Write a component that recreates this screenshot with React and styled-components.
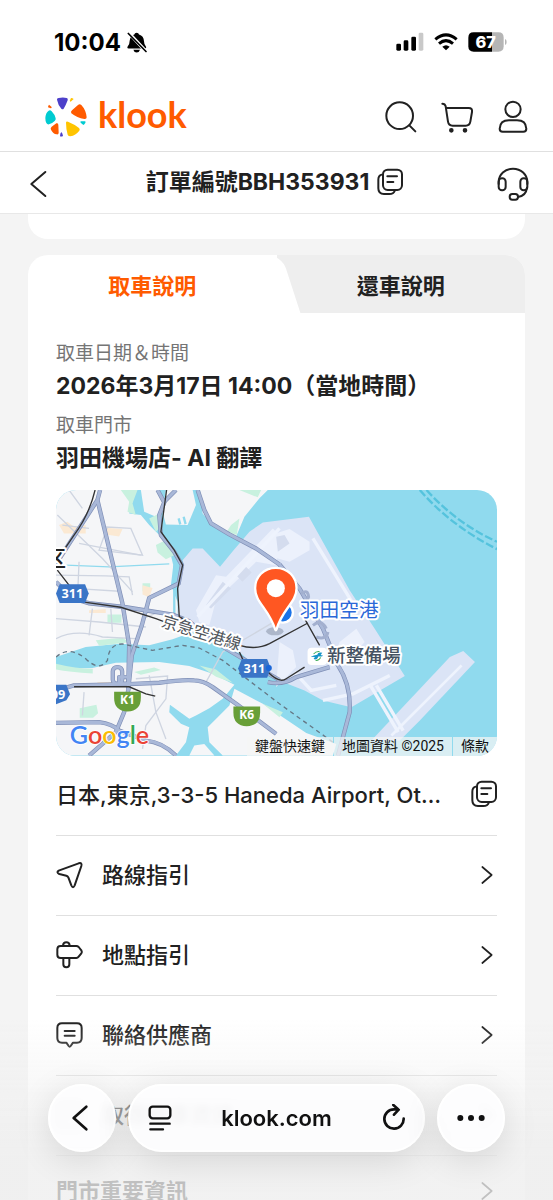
import styled, { createGlobalStyle } from 'styled-components';

const GlobalStyle = createGlobalStyle`
  * {
    box-sizing: border-box;
  }

  body {
    margin: 0;
    background: #f4f4f4;
    color: #212121;
    font-family: Inter, 'Noto Sans CJK TC', sans-serif;
  }

  button {
    border: 0;
    padding: 0;
    background: none;
    color: inherit;
    font: inherit;
    cursor: pointer;
  }

  h1, h2, p, dl, dd, ul {
    margin: 0;
    padding: 0;
  }

  a {
    color: inherit;
    text-decoration: none;
  }
`;

const Page = styled.div`
  display: flex;
  flex-direction: column;
  height: 100vh;
  overflow: hidden;
`;

const Svg = styled.svg`
  display: block;
  flex: none;
  fill: none;
  stroke: currentColor;
  stroke-width: ${(props) => props.$stroke || 6};
  stroke-linecap: round;
  stroke-linejoin: round;
`;

const StatusBar = styled.div`
  display: flex;
  flex: none;
  align-items: center;
  justify-content: space-between;
  height: 84px;
  padding: 0 46px 0 54px;
  background: #fff;
  color: #000;
`;

const Clock = styled.div`
  display: flex;
  align-items: center;
  gap: 6px;
  font-size: 24px;
  font-weight: 700;
`;

const StatusIcons = styled.div`
  display: flex;
  align-items: center;
  gap: 10px;
`;

const BrandBar = styled.header`
  display: flex;
  flex: none;
  align-items: center;
  justify-content: space-between;
  height: 68px;
  padding: 0 22px 2px 45px;
  border-bottom: 1px solid #e0e0e0;
  background: #fff;
`;

const Brand = styled.a`
  display: flex;
  align-items: center;
  gap: 11px;
  color: #ff5b00;
  font-family: Lato, sans-serif;
  font-size: 36px;
  font-weight: 700;
  line-height: 40px;

  span {
    padding-bottom: 6px;
  }
`;

const BrandActions = styled.nav`
  display: flex;
  gap: 20px;
`;

const OrderBar = styled.div`
  display: flex;
  flex: none;
  align-items: center;
  justify-content: space-between;
  height: 62px;
  padding: 2px 22px 0;
  border-bottom: 1px solid #e8e8e8;
  background: #fff;
`;

const OrderTitle = styled.div`
  display: flex;
  align-items: center;
  gap: 8px;
  padding-bottom: 4px;

  h1 {
    font-size: 23px;
    font-weight: 700;
    line-height: 32px;
  }
`;

const Content = styled.main`
  display: flex;
  flex: 1;
  flex-direction: column;
  gap: 16px;
  min-height: 0;
  padding: 0 28px;
`;

const PreviousCard = styled.div`
  flex: none;
  height: 25px;
  border-radius: 0 0 20px 20px;
  background: #fff;
`;

const Card = styled.section`
  flex: none;
  border-radius: 20px;
  background: #fff;
`;

const Tabs = styled.div`
  display: flex;
  height: 58px;
  border-radius: 20px 20px 0 0;
  background: #eee;
  overflow: hidden;
`;

const Tab = styled.button`
  position: relative;
  z-index: ${(props) => (props.$active ? 1 : 0)};
  flex: 1;
  font-size: 22px;
  font-weight: 700;
  color: ${(props) => (props.$active ? '#ff5b00' : '#212121')};
  background: ${(props) => (props.$active ? '#fff' : 'none')};

  /* slanted right edge of the selected tab */
  &::after {
    content: '';
    display: ${(props) => (props.$active ? 'block' : 'none')};
    position: absolute;
    z-index: -1;
    top: 0;
    right: -14px;
    width: 60px;
    height: 58px;
    border-top-right-radius: 14px;
    background: #fff;
    transform: skewX(18deg);
  }
`;

const CardBody = styled.div`
  padding: 27px 28px 60px;
`;

const Details = styled.dl`
  display: grid;
  gap: 8px;
  margin-bottom: 14px;

  dt {
    color: #757575;
    font-size: 19px;
    line-height: 28px;
  }

  dd {
    font-size: 23px;
    font-weight: 700;
    line-height: 36px;
  }
`;

const MapBox = styled.div`
  position: relative;
  aspect-ratio: 440 / 265;
  border-radius: 20px;
  background: #90daee;
  overflow: hidden;

  > svg {
    display: block;
    width: 100%;
    height: 100%;
  }
`;

const Attribution = styled.div`
  position: absolute;
  right: 0;
  bottom: 0;
  display: flex;
  height: 19px;
  color: #111;
  font-family: Roboto, 'Noto Sans CJK TC', sans-serif;
  font-size: 14px;
  line-height: 19px;

  > * {
    padding: 0 8px;
    background: rgba(245, 245, 245, 0.72);
  }

  > * + * {
    margin-left: 1px;
  }
`;

const Address = styled.div`
  display: flex;
  align-items: center;
  justify-content: space-between;
  gap: 20px;
  height: 79px;

  p {
    overflow: hidden;
    font-size: 22px;
    font-weight: 500;
    line-height: 32px;
    text-overflow: ellipsis;
    white-space: nowrap;
  }

  button {
    padding-bottom: 2px;
  }
`;

const Menu = styled.ul`
  list-style: none;
`;

const MenuButton = styled.button`
  display: flex;
  align-items: center;
  width: 100%;
  height: ${(props) => (props.$strong ? 72 : 80)}px;
  border-top: 1px solid #e0e0e0;
  font-size: 22px;
  font-weight: ${(props) => (props.$strong ? 700 : 500)};
  text-align: left;

  span {
    flex: 1;
    margin-left: ${(props) => (props.$strong ? 0 : 18)}px;
    padding-bottom: 4px;
  }
`;

const Toolbar = styled.div`
  position: fixed;
  right: 0;
  bottom: 0;
  left: 0;
  display: flex;
  align-items: center;
  gap: 12px;
  height: 180px;
  padding: 16px 48px 0;
  background: linear-gradient(
    rgba(244, 244, 244, 0),
    rgba(240, 240, 240, 0.5) 40%,
    rgba(238, 238, 238, 0.78) 75%
  );
`;

const Glass = styled.div`
  display: flex;
  align-items: center;
  justify-content: center;
  height: 68px;
  border: 2px solid #fff;
  border-radius: 34px;
  background: rgba(253, 253, 254, 0.9);
  box-shadow: 0 8px 36px rgba(0, 0, 0, 0.12);
  backdrop-filter: blur(3px);
  color: #111;
`;

const RoundButton = styled(Glass).attrs({ as: 'button' })`
  flex: none;
  width: 68px;
  border: 2px solid #fff;
  background: rgba(253, 253, 254, 0.93);
`;

const AddressPill = styled(Glass)`
  flex: 1;
  justify-content: space-between;
  padding: 0 16px;
  font-size: 22px;
  font-weight: 600;
`;

function CopyIcon() {
  return (
    <Svg width="26" height="28" viewBox="312 503 78 84">
      <rect x="330" y="508" width="57" height="61" rx="14" />
      <path d="M326 523q-10 3-10 15v26q0 17 17 17h16q13 0 16-9M343 528h29M343 545h18" />
    </Svg>
  );
}

function Chevron() {
  return (
    <Svg width="20" height="28" viewBox="601 273 60 84" $stroke={5}>
      <path d="M617 291l28 24-28 24" />
    </Svg>
  );
}

function BellOffIcon() {
  return (
    <Svg width="20" height="21" viewBox="383 94 60 62" $stroke={5}>
      <g fill="currentColor" stroke="none">
        <path d="M412 96q6 0 7 5 14 4 15 20 0 10 6 17 2 5-4 5H388q-6 0-3-6 6-6 6-17 2-16 14-19 1-5 7-5z" />
        <path d="M402 147h20q-2 8-10 8t-10-8z" />
      </g>
      <path d="M389 97l52 56" stroke="#fff" strokeWidth="10" />
      <path d="M387 98l53 54" />
    </Svg>
  );
}

function SignalIcon() {
  return (
    <Svg width="28" height="20" viewBox="361 95 84 60">
      <g fill="currentColor" stroke="none">
        <rect x="362" y="130" width="14" height="21" rx="4" />
        <rect x="384" y="120" width="14" height="31" rx="4" />
        <rect x="407" y="109" width="14" height="42" rx="4" />
        <rect x="429" y="97" width="14" height="54" rx="4" fill="#c9c9c9" />
      </g>
    </Svg>
  );
}

function WifiIcon() {
  return (
    <Svg width="24" height="20" viewBox="474 94 72 60" $stroke={9}>
      <g strokeLinecap="butt">
        <path d="M478 116Q510 89 542 116" />
        <path d="M489 129Q510 111 531 129" />
      </g>
      <path d="M499 138q11-9 22 0l-11 11z" fill="currentColor" stroke="none" />
    </Svg>
  );
}

function BatteryIcon() {
  return (
    <Svg width="39" height="20" viewBox="576 94 117 60">
      <g stroke="none">
        <path d="M593 95h55v58h-55q-16 0-16-16v-26q0-16 16-16z" fill="#000" />
        <path d="M648 95h19q16 0 16 16v26q0 16-16 16h-19z" fill="#b5b5b5" />
        <path d="M687 115q5 2 5 9t-5 9z" fill="#b5b5b5" />
        <text x="629" y="142" fill="#fff" fontSize="49" fontWeight="800" textAnchor="middle">67</text>
      </g>
    </Svg>
  );
}

function KlookMark() {
  return (
    <Svg width="42" height="40" viewBox="135 287 126 120">
      <g stroke="none">
        <path fill="#4d40ca" d="M171 295q-1-4 5-5 13-3 24 0 5 1 3 7-5 14-12 25-3 4-7 0-10-11-13-27z" />
        <path fill="#ffc400" d="M213 290q5 0 8 3l-9 8q-3 0-2-4z" />
        <path fill="#ff5b00" d="M214 336q-3-4 2-9l18-16q5-4 10 0 14 15 16 37 0 6-7 5-22-3-39-17z" />
        <path fill="#00cbd1" d="M242 360h13q3 1 1 5l-5 6q-3 0-10-8z" />
        <path fill="#ffc400" d="M198 364q0-5 6-3 20 8 33 19 4 3 1 8-11 14-27 17-6 0-8-5-5-18-5-36z" />
        <path fill="#4d40ca" d="M184 392q4 5 5 11-3 4-9 2 0-9 4-13z" />
        <path fill="#ff5b00" d="M153 385q-3-5 2-9l14-10q6-2 6 5l1 23q0 6-6 5-11-2-17-14z" />
        <path fill="#00cbd1" d="M136 350q1-16 10-22 5-3 9 2 9 9 12 21 1 5-3 8-8 8-17 10-5 1-8-4-3-5-3-15z" />
        <path fill="#ff5b00" d="M147 310l8 7q0 4-3 4l-8-3q0-5 3-8z" />
      </g>
    </Svg>
  );
}

const ROADS = [
  'M145 45L220 355 240 480 237 615',
  'M145 45L22 235M145 45l8-30',
  'M21 290Q70 345 120 354L230 366 370 388 420 408 480 460 580 520 690 584',
  'M325 15L345 52 330 90 335 150 375 200 398 240 388 295 300 338 278 420 248 510 237 615 225 680 200 740 120 810',
  'M380 15L345 50',
  'M21 615L75 600 240 596 330 592Q400 582 435 585 460 585 490 605L560 655 680 745',
  'M21 712L150 710Q190 715 210 735L290 765Q340 770 380 810',
  'M445 15L465 75 485 115 540 148 620 190 690 238',
  'M655 590Q700 600 740 575L840 545M690 238L750 310 820 430 865 540Q905 600 900 680L865 810',
];

const MINOR_ROADS = [
  'M25 90L160 220 250 320',
  'M160 125L245 130 280 210 150 195 175 125',
  'M90 175L275 210M90 230L85 345',
  'M21 270L170 272 240 275 250 330',
  'M85 310L210 318M21 400L150 410 290 425',
  'M130 370L120 450M185 370L190 440',
  'M21 460Q80 430 160 455L260 460',
  'M260 580L355 572 350 640 290 720 280 790',
  'M280 400L330 380M60 15L100 70M40 120L120 130',
  'M105 620L100 690M470 590L520 500 690 400',
  'M300 570L320 680 350 760',
];

const LABEL_HALO = { paintOrder: 'stroke', stroke: '#fff', strokeWidth: 12, strokeLinejoin: 'round' };

function Shield({ x, y, children }) {
  return (
    <g transform={`translate(${x} ${y})`}>
      <path d="M-38-28h76l11 28-11 28h-76l-11-28z" fill="#3a75c7" />
      <text y="14" fill="#fff" fontFamily="Noto Sans, sans-serif" fontSize="38" fontWeight="700" textAnchor="middle">{children}</text>
    </g>
  );
}

function ExpresswayBadge({ x, y, children }) {
  return (
    <g transform={`translate(${x} ${y})`}>
      <path d="M-40-29h80v18q0 40-40 41-40-1-40-41z" fill="#689f38" />
      <text y="9" fill="#fff" fontFamily="Noto Sans, sans-serif" fontSize="36" fontWeight="700" textAnchor="middle">{children}</text>
    </g>
  );
}

function AirportMap() {
  return (
    <svg viewBox="21 15 1320 795" preserveAspectRatio="xMidYMid slice" role="img" aria-label="羽田空港">
      {/* land */}
      <g fill="#f5f6f8">
        <path d="M21 15H260L240 85 275 90 300 120 330 150 360 190 372 240 365 300 385 350 385 400 430 440 370 462 300 480 210 475 110 485 21 515z" />
        <path d="M21 548Q80 550 130 548L200 532 330 530 420 542 490 565 555 598 520 640 480 668 440 690 420 700 362 658 360 680 395 715 420 725 410 770 380 810H21z" />
        <path d="M555 610L640 655 770 742 860 775 850 810H520L480 770 475 725 505 695 540 660z" />
        <path d="M420 810L435 780 465 775 495 810z" />
        <path d="M350 15H430L440 60 415 120 350 118 340 80z" />
        <path d="M275 15H330L345 60 320 95 285 80z" />
        <path d="M452 15H655L630 40 585 95 560 155 500 130 460 85z" />
      </g>
      <g fill="#c8f1df">
        <path d="M215 15h50l-15 40 10 35-25-10 5-30zM570 15h65l-10 22zM545 120l25-20-8 50-30-10zM320 180l30-15 25 45-25 12-25-20z" />
        <path d="M280 294h23v24h-23zM175 388h42v24h-42zM92 668l50-10 5 25-15 14H92zM21 535q60 15 110 15v14q-70-5-110-12zM140 465l80-8 20 14-90 10zM450 540l50 12 50 40-50-18zM640 655l60 25-10 15z" />
        <path d="M300 100l30-15 10 35-20 20zM255 560l60-14 20 8-60 14z" />
      </g>
      <g fill="#fbe9d3">
        <path d="M30 120l25-10 20 15 35-5v25H45zM120 375l50-4v12h-50zM170 128l50 4-10 22-35-5zM145 590h50v12h-50zM280 300l30 8-10 28-20-8z" />
      </g>

      {/* airport island and the outer runway */}
      <g fill="#dbe4f6">
        <path d="M385 400L388 290 404 240 400 225 430 190 460 190 512 245 550 198 600 140 640 112 778 95 900 315 975 430 1065 572 905 665 820 645 765 615 700 590 620 545 570 500 430 440z" />
        <path d="M965 765L1200 515 1240 497 1275 530 1110 705 1050 765z" />
      </g>
      <g fill="#ecf1fc">
        <path d="M440 375L500 270 530 275 670 130 690 150 680 240 620 230 500 345 480 420 450 410z" />
        <path d="M665 150L720 132 780 170 780 195 720 230 665 215z" />
        <path d="M870 470L920 430 945 470 900 520 850 520zM690 470l40 25 10 50-60 60z" />
      </g>
      <g fill="#d4dcee">
        <path d="M470 360l50-70 25 20-60 60zM680 155l25-5 15 25-35 25zM560 270l25-30 22 22-28 28z" />
      </g>
      <g fill="none" stroke="#eef3fd" strokeWidth="10">
        <path d="M790 160L910 355M735 560L785 615 860 600M820 645L910 625 1020 570" />
        <path d="M962 600L1045 740M980 600L1060 735" />
        <path d="M1025 750L1235 540" strokeWidth="8" />
        <path d="M445 395L690 130" />
      </g>

      {/* small canals */}
      <g fill="none" stroke="#90daee">
        <path d="M50 240L180 245 360 236" strokeWidth="4" />
        <path d="M388 100l5 18M403 95l6 22M375 240v150" strokeWidth="7" />
      </g>

      <g fill="none" stroke="#cfd5e1" strokeWidth="4">
        {MINOR_ROADS.map((d) => <path key={d} d={d} />)}
      </g>
      <g fill="none" stroke="#8090b7" strokeWidth="13" strokeLinejoin="round">
        {ROADS.map((d) => <path key={d} d={d} />)}
        <rect x="191" y="545" width="28" height="50" rx="13" />
        <path d="M210 575h28v20h-28z" />
      </g>
      <g fill="none" stroke="#a9b8d8" strokeWidth="9" strokeLinejoin="round">
        {ROADS.map((d) => <path key={d} d={d} />)}
        <rect x="191" y="545" width="28" height="50" rx="13" />
        <path d="M210 575h28v20h-28z" />
      </g>

      {/* terminal loops */}
      <g fill="none" stroke="#a3b0cf" strokeWidth="9">
        <path d="M755 325q20-15 22 10l-10 20M790 420q25-20 40 10M800 455q30 10 35-15" />
      </g>

      {/* railways */}
      <g fill="none" stroke="#333" strokeWidth="4">
        <path d="M138 15Q120 90 75 150L22 228M25 255L60 300" />
        <path d="M352 15L335 140 375 195 400 240 385 310 390 395 420 410" />
        <path d="M100 350L215 366 320 400 360 415M570 480Q620 495 660 475L775 413" />
        <path d="M75 604H240L290 625 318 632M570 500l10 22M655 560Q690 595 710 580L765 545M765 400L810 480" />
      </g>

      <path d="M21 515Q60 480 110 520 150 560 175 525 180 475 220 476L310 495 400 480 450 488 520 525 690 655 850 770" fill="none" stroke="#657886" strokeWidth="4" strokeDasharray="13 11" />
      <g fill="none" stroke="#55c3dd" strokeWidth="7" strokeDasharray="24 8">
        <path d="M1110 15Q1200 120 1341 192" />
        <path d="M1130 15Q1220 115 1341 170" />
      </g>

      <Shield x={70} y={325}>311</Shield>
      <Shield x={615} y={549}>311</Shield>
      <path d="M21 598H52l11 28-11 18-31 12z" fill="#3a75c7" />
      <text x="5" y="640" fill="#fff" fontFamily="Noto Sans, sans-serif" fontSize="38" fontWeight="700">09</text>
      <ExpresswayBadge x={235} y={648}>K1</ExpresswayBadge>
      <ExpresswayBadge x={592} y={692}>K6</ExpresswayBadge>

      <text x="-15" y="243" fill="#222" fontSize="66" fontWeight="500" {...LABEL_HALO}>区</text>
      <text transform="translate(334 423) rotate(17)" fill="#50555b" fontSize="49" {...LABEL_HALO}>京急空港線</text>
      <text x="751" y="394" fill="#2a68d8" fontSize="59" {...LABEL_HALO}>羽田空港</text>
      <rect x="774" y="487" width="58" height="52" rx="12" fill="#fff" />
      <path d="M783 514q10-4 20-6 2-9 15-6l-5 7 8 2q-9 4-14 2-4 12-15 8l4-6z" fill="#1594c7" />
      <path d="M792 506q8-9 18-7M813 516q-4 10-15 9" fill="none" stroke="#3fae5a" strokeWidth="3" />
      <text x="833" y="530" fill="#455262" fontSize="55" fontWeight="500" {...LABEL_HALO}>新整備場</text>

      {/* airport pin half hidden by the marker */}
      <circle cx="700" cy="382" r="30" fill="#1a73e8" stroke="#fff" strokeWidth="7" />
      <circle cx="658" cy="548" r="9" fill="#1a66d8" />
      <ellipse cx="676" cy="438" rx="26" ry="12" fill="#8d99ad" opacity="0.6" />
      <path d="M679 248c-36 0-62 27-62 61 0 43 40 60 60 123q2 6 4 0c18-62 60-80 60-123 0-34-26-61-62-61z" fill="#ff5722" stroke="#fff" strokeWidth="7" />
      <circle cx="679" cy="309" r="27" fill="#fff" />

      <text x="62" y="775" fontSize="75" fontFamily="Lato, sans-serif" fontWeight="600" {...LABEL_HALO} strokeWidth="5">
        <tspan fill="#4285f4">G</tspan>
        <tspan fill="#ea4335">o</tspan>
        <tspan fill="#fbbc05">o</tspan>
        <tspan fill="#4285f4">g</tspan>
        <tspan fill="#34a853">l</tspan>
        <tspan fill="#ea4335">e</tspan>
      </text>
    </svg>
  );
}

const MENU_ITEMS = [
  {
    label: '路線指引',
    icon: (
      <Svg width="28" height="28" viewBox="171 273 84 84">
        <path d="M179 302l60-22q11-3 8 8l-20 58q-5 11-10 0l-9-24q-2-4-6-5l-21-5q-10-5-2-10z" />
      </Svg>
    ),
  },
  {
    label: '地點指引',
    icon: (
      <Svg width="28" height="28" viewBox="171 515 84 84">
        <path d="M185 530h47q4 0 7 3l8 10q3 5 0 9l-8 10q-3 4-7 4h-47q-10 0-10-10v-16q0-10 10-10z" />
        <path d="M192 528q1-9 10-9t10 9M193 568v17q0 9 9 9t9-9v-17" />
      </Svg>
    ),
  },
  {
    label: '聯絡供應商',
    icon: (
      <Svg width="28" height="28" viewBox="171 755 84 84">
        <path d="M189 762h45q14 0 14 14v30q0 14-14 14h-12l-7 10q-3 4-6 0l-7-10h-13q-14 0-14-14v-30q0-14 14-14z" />
        <path d="M197 785h30M197 799h30" />
      </Svg>
    ),
  },
  {
    label: '取得租車資訊',
    icon: (
      <Svg width="28" height="28" viewBox="171 755 84 84">
        <path d="M189 762h45q14 0 14 14v42q0 14-14 14h-45q-14 0-14-14v-42q0-14 14-14zM192 785h38M192 805h24" />
      </Svg>
    ),
  },
];

export default function App() {
  return (
    <Page>
      <GlobalStyle />
      <StatusBar>
        <Clock>
          10:04
          <BellOffIcon />
        </Clock>
        <StatusIcons>
          <SignalIcon />
          <WifiIcon />
          <BatteryIcon />
        </StatusIcons>
      </StatusBar>

      <BrandBar>
        <Brand href="#home">
          <KlookMark />
          <span>klook</span>
        </Brand>
        <BrandActions>
          <button type="button" aria-label="搜尋">
            <Svg width="36" height="36" viewBox="321 297 108 108">
              <circle cx="371" cy="347" r="40" />
              <path d="M400 376l18 18" />
            </Svg>
          </button>
          <button type="button" aria-label="購物車">
            <Svg width="36" height="36" viewBox="489 297 108 108">
              <path d="M499 311q8 0 10 8l7 46q2 12 14 12h39q12 0 14-12l5-29q2-12-10-12h-68" />
              <circle cx="526" cy="391" r="4" fill="currentColor" />
              <circle cx="567" cy="391" r="4" fill="currentColor" />
            </Svg>
          </button>
          <button type="button" aria-label="帳戶">
            <Svg width="36" height="36" viewBox="658 297 108 108">
              <circle cx="712" cy="328" r="23" />
              <path d="M700 361h24q27 0 28 25 0 9-9 9h-62q-9 0-9-9 1-25 28-25z" />
            </Svg>
          </button>
        </BrandActions>
      </BrandBar>

      <OrderBar>
        <button type="button" aria-label="返回">
          <Svg width="32" height="32" viewBox="66 506 96 96">
            <path d="M136 518l-42 36 42 36" />
          </Svg>
        </button>
        <OrderTitle>
          <h1>訂單編號BBH353931</h1>
          <button type="button" aria-label="複製訂單編號"><CopyIcon /></button>
        </OrderTitle>
        <button type="button" aria-label="客服">
          <Svg width="36" height="36" viewBox="658 501 108 108">
            <path d="M669 555v-6a43 40 0 0 1 86 0v6" />
            <rect x="669" y="538" width="21" height="36" rx="10" />
            <rect x="734" y="538" width="21" height="36" rx="10" />
            <path d="M754 566q-3 25-27 28" />
            <rect x="702" y="585" width="25" height="17" rx="8" />
          </Svg>
        </button>
      </OrderBar>

      <Content>
        <PreviousCard />
        <Card>
          <Tabs role="tablist">
            <Tab type="button" role="tab" aria-selected="true" $active>取車說明</Tab>
            <Tab type="button" role="tab" aria-selected="false">還車說明</Tab>
          </Tabs>
          <CardBody>
            <Details>
              <div>
                <dt>取車日期＆時間</dt>
                <dd>2026年3月17日 14:00（當地時間）</dd>
              </div>
              <div>
                <dt>取車門市</dt>
                <dd>羽田機場店- AI 翻譯</dd>
              </div>
            </Details>

            <MapBox>
              <AirportMap />
              <Attribution>
                <button type="button">鍵盤快速鍵</button>
                <span>地圖資料 ©2025</span>
                <a href="#terms">條款</a>
              </Attribution>
            </MapBox>

            <Address>
              <p>日本,東京,3-3-5 Haneda Airport, Ota City, Tokyo</p>
              <button type="button" aria-label="複製地址"><CopyIcon /></button>
            </Address>

            <Menu>
              {MENU_ITEMS.map((item) => (
                <li key={item.label}>
                  <MenuButton type="button">
                    {item.icon}
                    <span>{item.label}</span>
                    <Chevron />
                  </MenuButton>
                </li>
              ))}
              <li>
                <MenuButton type="button" $strong>
                  <span>門市重要資訊</span>
                  <Chevron />
                </MenuButton>
              </li>
            </Menu>
          </CardBody>
        </Card>
      </Content>

      <Toolbar>
        <RoundButton type="button" aria-label="上一頁">
          <Svg width="28" height="28" viewBox="203 163 84 84" $stroke={8}>
            <path d="M258 171l-38 34 38 34" />
          </Svg>
        </RoundButton>
        <AddressPill>
          <button type="button" aria-label="頁面選單">
            <Svg width="28" height="28" viewBox="440 163 84 84" $stroke={7}>
              <rect x="451" y="171" width="62" height="35" rx="9" />
              <path d="M453 222h58M453 239h38" />
            </Svg>
          </button>
          <span>klook.com</span>
          <button type="button" aria-label="重新載入">
            <Svg width="28" height="28" viewBox="312 162 84 84" $stroke={8}>
              <path d="M386 206a29 29 0 1 1-29-28h12M355 165l16 14-14 15" />
            </Svg>
          </button>
        </AddressPill>
        <RoundButton type="button" aria-label="更多">
          <Svg width="28" height="28" viewBox="543 161 84 84">
            <g fill="currentColor" stroke="none">
              <circle cx="553" cy="203" r="9" />
              <circle cx="585" cy="203" r="9" />
              <circle cx="617" cy="203" r="9" />
            </g>
          </Svg>
        </RoundButton>
      </Toolbar>
    </Page>
  );
}
